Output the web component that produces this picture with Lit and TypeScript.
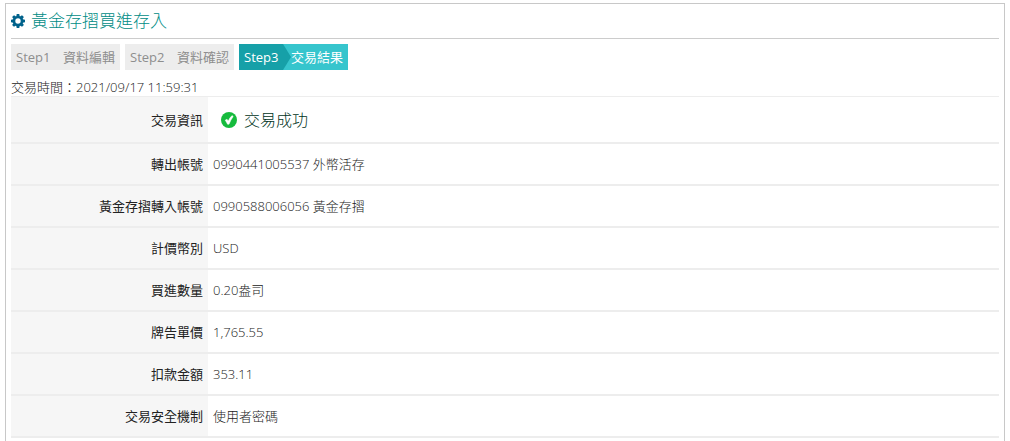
import { LitElement, html, css, svg } from "lit";
import { customElement, property } from "lit/decorators.js";
import { classMap } from "lit/directives/class-map.js";

const steps = [
  { name: "Step1", title: "資料編輯" },
  { name: "Step2", title: "資料確認" },
  { name: "Step3", title: "交易結果" },
];

const details = [
  { label: "轉出帳號", value: "0990441005537 外幣活存" },
  { label: "黃金存摺轉入帳號", value: "0990588006056 黃金存摺" },
  { label: "計價幣別", value: "USD" },
  { label: "買進數量", value: "0.20盎司" },
  { label: "牌告單價", value: "1,765.55" },
  { label: "扣款金額", value: "353.11" },
  { label: "交易安全機制", value: "使用者密碼" },
];

const gearTeeth = [0, 45, 90, 135, 180, 225, 270, 315];

@customElement("step-bar")
export class StepBar extends LitElement {
  @property({ type: Number }) current = 1;

  static styles = css`
    :host {
      display: block;
    }
    .steps {
      display: flex;
      gap: 5px;
      margin: 0;
      padding: 0;
      list-style: none;
    }
    .step {
      display: flex;
      padding-right: 5px;
      line-height: 26px;
      color: #8e8e8e;
      background: #ededed;
    }
    .name {
      box-sizing: border-box;
      width: 52px;
      padding-left: 5px;
    }
    .active {
      color: #fff;
      background: #36c5cd;
    }
    .active .name {
      background: #16a0a8;
      clip-path: polygon(0 0, 44px 0, 100% 50%, 44px 100%, 0 100%);
    }
  `;

  render() {
    return html`
      <ol class="steps">
        ${steps.map(
          (step, i) => html`
            <li class=${classMap({ step: true, active: i + 1 === this.current })}>
              <span class="name">${step.name}</span><span class="title">${step.title}</span>
            </li>
          `
        )}
      </ol>
    `;
  }
}

@customElement("app-root")
export class AppRoot extends LitElement {
  static styles = css`
    :host {
      display: block;
      padding: 3px 5px 0;
      font-family: "Open Sans", "Noto Sans CJK TC", sans-serif;
      font-size: 13px;
      line-height: 18px;
      color: #444;
      background: #fff;
    }
    .panel {
      padding: 0 5px 3px;
      border: 1px solid #c8c8c8;
      border-bottom: 0;
    }
    .heading {
      display: flex;
      align-items: center;
      gap: 6px;
      margin: 0 0 5px;
      border-bottom: 1px solid #ccc;
      font-size: 17px;
      font-weight: 300;
      line-height: 34px;
      color: #008c85;
    }
    .gear {
      width: 14px;
      height: 14px;
      color: #00628b;
    }
    .time {
      margin: 8px 0 0;
      font-weight: 300;
      color: #222;
    }
    .result {
      width: 100%;
      border-spacing: 0;
      border-top: 1px solid #ededed;
    }
    .label,
    .value {
      height: 40px;
      padding: 0 5px;
      border-bottom: 2px solid #ededed;
    }
    .value {
      font-weight: 300;
      color: #222;
    }
    .label {
      width: 197px;
      box-sizing: border-box;
      height: 42px;
      background: #f6f6f6;
      font-weight: 400;
      text-align: right;
      color: #222;
    }
    .status-row .label,
    .status-row .value {
      height: 45px;
    }
    .status-row .label {
      height: 47px;
    }
    .status {
      display: flex;
      align-items: center;
      gap: 7px;
      padding-left: 8px;
      font-size: 16px;
      line-height: 24px;
      color: #003322;
    }
    .check {
      width: 16px;
      height: 16px;
    }
  `;

  render() {
    return html`
      <main class="panel" lang="zh-Hant">
        <h1 class="heading">
          <svg class="gear" viewBox="0 0 14 14" aria-hidden="true">
            ${gearTeeth.map(
              (angle) => svg`
                <path d="M5.3 2.4 5.700 0h2.600l.4 2.4z" fill="currentColor" transform="rotate(${angle} 7 7)" />
              `
            )}
            <circle cx="7" cy="7" r="4" fill="none" stroke="currentColor" stroke-width="2.6" />
          </svg>
          黃金存摺買進存入
        </h1>
        <step-bar .current=${3}></step-bar>
        <p class="time">交易時間：2021/09/17 11:59:31</p>
        <table class="result">
          <tbody>
            <tr class="status-row">
              <th class="label" scope="row">交易資訊</th>
              <td class="value">
                <div class="status">
                  <svg class="check" viewBox="0 0 16 16" aria-hidden="true">
                    <circle cx="8" cy="8" r="8" fill="#16bb3d" />
                    <path d="M4.2 8.200 6 7.200 7.200 9.100Q8.600 5.800 11 3.600L12.200 4.500Q9.600 8 8 12.200H6.500Q5.600 10 4.200 8.200z" fill="#fff" stroke="#fff" stroke-width=".5" />
                  </svg>
                  交易成功
                </div>
              </td>
            </tr>
            ${details.map(
              (row) => html`
                <tr>
                  <th class="label" scope="row">${row.label}</th>
                  <td class="value">${row.value}</td>
                </tr>
              `
            )}
          </tbody>
        </table>
      </main>
    `;
  }
}
